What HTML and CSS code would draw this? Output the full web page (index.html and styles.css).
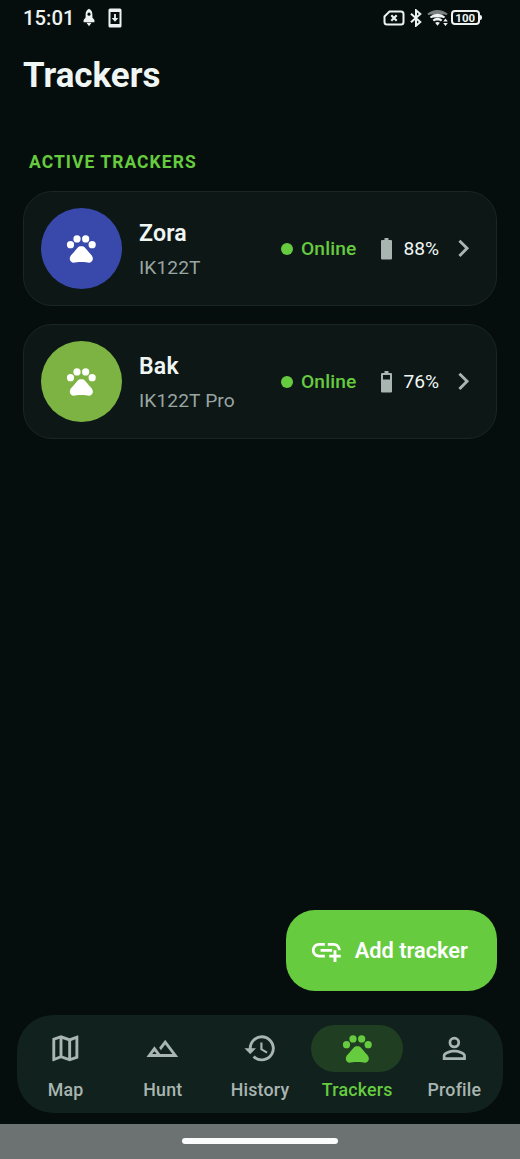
FILE: index.html
```html
<!DOCTYPE html>
<html lang="en">
<head>
<meta charset="utf-8">
<title>Trackers</title>
<link rel="stylesheet" href="styles.css">
</head>
<body>
<svg class="defs" width="0" height="0" aria-hidden="true">
  <symbol id="paw" viewBox="0 0 24 24">
    <circle cx="4.5" cy="9.5" r="2.5"/><circle cx="9" cy="5.5" r="2.5"/><circle cx="15" cy="5.5" r="2.5"/><circle cx="19.5" cy="9.5" r="2.5"/>
    <path d="M17.34 14.86c-.87-1.02-1.6-1.89-2.48-2.91-.46-.54-1.05-1.08-1.75-1.32-.11-.04-.22-.07-.33-.09-.25-.04-.52-.04-.78-.04s-.53 0-.79.05c-.11.02-.22.05-.33.09-.7.24-1.28.78-1.75 1.32-.87 1.02-1.6 1.89-2.48 2.91-1.31 1.31-2.92 2.76-2.62 4.79.29 1.02 1.02 2.03 2.33 2.32.73.15 3.06-.44 5.54-.44h.18c2.48 0 4.81.58 5.54.44 1.31-.29 2.04-1.31 2.33-2.32.31-2.04-1.3-3.49-2.61-4.8z"/>
  </symbol>
  <symbol id="chevron" viewBox="0 0 24 24"><path d="M10 6 8.59 7.41 13.17 12l-4.58 4.59L10 18l6-6z"/></symbol>
</svg>
<div class="screen">
  <div class="status">
    <span class="clock">15:01</span>
    <svg class="rocket" viewBox="0 0 12 20"><path fill-rule="evenodd" d="M6 .8C3.700 2 2.600 4 2.600 6.500V9.500L.6 12V14.300H11.400V12L9.400 9.500V6.500C9.400 4 8.300 2 6 .8zM6 4.600a1.600 1.600 0 1 1 0 3.200 1.600 1.600 0 0 1 0-3.200z"/><path d="M3.500 14.800H8.500L6 18.300z"/></svg>
    <svg class="update" viewBox="0 0 14 20"><path fill-rule="evenodd" d="M2 .5H12A1.500 1.500 0 0 1 13.500 2V18A1.500 1.500 0 0 1 12 19.500H2A1.500 1.500 0 0 1 .5 18V2A1.500 1.500 0 0 1 2 .5zM2.500 4V16H11.500V4z"/><path d="M6.100 6H7.900V10H10.300L7 13.800 3.700 10H6.100z"/></svg>
    <span class="spacer"></span>
    <svg class="sim" viewBox="0 0 22 16"><path d="M6.500 1.500H18a2.500 2.500 0 0 1 2.500 2.500V12a2.500 2.500 0 0 1-2.500 2.500H4A2.500 2.500 0 0 1 1.500 12V6.500z" fill="none" stroke="currentColor" stroke-width="2"/><path d="m8.300 5.300 5.400 5.400m0-5.400-5.400 5.400" stroke="currentColor" stroke-width="2.200"/></svg>
    <svg class="bluetooth" viewBox="0 0 12 18"><path d="m1 4.700 9.300 8.300L6 16.700V1.300L10.300 5 1 13.300" fill="none" stroke="currentColor" stroke-width="2"/></svg>
    <svg class="wifi" viewBox="0 0 22 18" fill="none" stroke="currentColor" stroke-width="2.200"><path d="M1 5.500C6.500.8 14.500.8 20 5.500" opacity=".5"/><path d="M3.500 8.500C7.500 5 13.500 5 17.500 8.500M6.300 11.600C8.700 9.400 12.300 9.400 14.700 11.600"/><path fill="currentColor" stroke="none" d="m10.500 16.700-2.400-2.900c1.400-1.200 3.400-1.200 4.800 0zM18.500 9.500l2.300 3h-4.600zM18.500 17l-2.300-3h4.600z"/></svg>
    <span class="power"><span class="power-level">100</span><span class="power-tip"></span></span>
  </div>
  <h1 class="title">Trackers</h1>
  <h2 class="section">ACTIVE TRACKERS</h2>
  <div class="cards">
    <div class="card">
      <div class="avatar blue"><svg class="icon"><use href="#paw"/></svg></div>
      <div class="info"><div class="name">Zora</div><div class="model">IK122T</div></div>
      <span class="dot"></span><span class="online">Online</span>
      <svg class="battery" viewBox="0 0 11 22"><path d="M3.500 0h4v2H10a1 1 0 0 1 1 1v17.500a1 1 0 0 1-1 1H1a1 1 0 0 1-1-1V3a1 1 0 0 1 1-1h2.500z"/></svg>
      <span class="percent">88%</span>
      <svg class="icon chevron"><use href="#chevron"/></svg>
    </div>
    <div class="card">
      <div class="avatar green"><svg class="icon"><use href="#paw"/></svg></div>
      <div class="info"><div class="name">Bak</div><div class="model">IK122T Pro</div></div>
      <span class="dot"></span><span class="online">Online</span>
      <svg class="battery" viewBox="0 0 11 22"><path fill-rule="evenodd" d="M3.500 0h4v2H10a1 1 0 0 1 1 1v17.500a1 1 0 0 1-1 1H1a1 1 0 0 1-1-1V3a1 1 0 0 1 1-1h2.500zM2 4v4.600h7V4z"/></svg>
      <span class="percent">76%</span>
      <svg class="icon chevron"><use href="#chevron"/></svg>
    </div>
  </div>
  <button class="add">
    <svg class="icon" viewBox="0 0 24 24"><path d="M8 11h8v2H8zm12.100 1H22c0-2.760-2.240-5-5-5h-4v1.900h4c1.710 0 3.100 1.390 3.100 3.100zM3.900 12c0-1.710 1.390-3.100 3.100-3.100h4V7H7c-2.760 0-5 2.240-5 5s2.240 5 5 5h4v-1.900H7c-1.710 0-3.100-1.390-3.100-3.100zM19 12h-2v3h-3v2h3v3h2v-3h3v-2h-3z"/></svg>
    <span class="add-label">Add tracker</span>
  </button>
  <nav class="nav">
    <div class="tab"><span class="pill"><svg class="icon" viewBox="0 0 24 24"><path fill-rule="evenodd" d="M20.500 3l-.16.030L15 5.100 9 3 3.360 4.900c-.21.070-.36.250-.36.480V20.500c0 .28.220.5.500.5l.16-.030L9 18.900l6 2.100 5.640-1.900c.21-.070.360-.25.360-.48V3.500c0-.28-.22-.5-.5-.5zM10 5.470l4 1.400v11.660l-4-1.400V5.470zm-5 .99l3-1.010v11.700l-3 1.160V6.460zm14 11.080l-3 1.010V6.860l3-1.160v11.840z"/></svg></span><span class="label">Map</span></div>
    <div class="tab"><span class="pill"><svg class="icon" viewBox="0 0 24 24"><path fill-rule="evenodd" d="M14 6l-4.220 5.630 1.250 1.670L14 9.330 19 16h-8.460l-4.010-5.370L1 18h22L14 6zM5 16l1.520-2.030L8.040 16H5z"/></svg></span><span class="label">Hunt</span></div>
    <div class="tab"><span class="pill"><svg class="icon" viewBox="0 0 24 24"><path d="M13 3a9 9 0 0 0-9 9H1l3.890 3.890.070.140L9 12H6c0-3.870 3.130-7 7-7s7 3.130 7 7-3.130 7-7 7c-1.930 0-3.680-.79-4.940-2.060l-1.420 1.420A8.954 8.954 0 0 0 13 21a9 9 0 0 0 0-18zm-1 5v5l4.280 2.540.72-1.210-3.500-2.080V8H12z"/></svg></span><span class="label">History</span></div>
    <div class="tab active"><span class="pill"><svg class="icon"><use href="#paw"/></svg></span><span class="label">Trackers</span></div>
    <div class="tab"><span class="pill"><svg class="icon" viewBox="0 0 24 24"><path fill-rule="evenodd" d="M12 4a4 4 0 1 0 0 8 4 4 0 0 0 0-8zm0 1.900a2.100 2.100 0 1 1 0 4.200 2.100 2.100 0 0 1 0-4.200zM12 13c-2.670 0-8 1.340-8 4v3h16v-3c0-2.660-5.330-4-8-4zm0 1.900c2.970 0 6.100 1.460 6.100 2.100v1.100H5.900V17c0-.64 3.130-2.100 6.100-2.100z"/></svg></span><span class="label">Profile</span></div>
  </nav>
  <div class="gesture"><span class="handle"></span></div>
</div>
</body>
</html>
```
FILE: styles.css
```css
* { box-sizing: border-box; }
body { margin: 0; background: #050e0d; font-family: Roboto, sans-serif; }
svg { display: block; fill: currentColor; flex: none; }
.defs { position: absolute; }
.screen { width: 520px; height: 1159px; display: flex; flex-direction: column; background: #050e0d; color: #f0f6f4; overflow: hidden; }
.status { height: 35px; padding: 0 38px 0 23px; display: flex; align-items: center; flex: none; color: #edf2f1; }
.clock { font-size: 20.3px; font-weight: 500; width: 59.5px; }
.rocket { width: 12px; height: 20px; }
.update { width: 14px; height: 20px; margin-left: 13px; }
.spacer { flex: 1; }
.sim { width: 22px; height: 16px; }
.bluetooth { width: 12px; height: 18px; margin-left: 5px; }
.wifi { width: 22px; height: 18px; margin-left: 5px; }
.power { display: flex; align-items: center; margin-left: 2px; }
.power-level { width: 29.5px; height: 15px; border: 2px solid #edf2f1; border-radius: 4px; font-size: 11.5px; line-height: 12px; font-weight: 700; text-align: center; }
.power-tip { width: 2px; height: 5px; background: #edf2f1; border-radius: 0 2px 2px 0; }
.title { margin: 20px 0 0 23px; font-size: 34.9px; line-height: 42px; font-weight: 700; }
.section { margin: 54px 0 0 29px; font-size: 17.5px; line-height: 22px; font-weight: 700; letter-spacing: 1.05px; color: #66cb3f; }
.cards { margin: 18px 23px 0; display: flex; flex-direction: column; gap: 18px; }
.card { height: 115px; border: 1.5px solid #1a2624; border-radius: 29px; background: #0c1716; padding: 0 16px 0 16.5px; display: flex; align-items: center; }
.avatar { width: 81px; height: 81px; border-radius: 50%; display: flex; align-items: center; justify-content: center; flex: none; color: #fff; }
.blue { background: #3949ab; }
.green { background: #7cb342; }
.icon { width: 34.67px; height: 34.67px; }
.info { width: 159px; padding: 5px 0 0 17.5px; flex: none; }
.name { font-size: 23.1px; line-height: 32px; font-weight: 600; letter-spacing: .2px; }
.model { margin-top: 2px; font-size: 19.2px; line-height: 32px; letter-spacing: .1px; color: #9aa5a2; white-space: nowrap; }
.dot { width: 12px; height: 12px; border-radius: 50%; background: #66cb3f; flex: none; }
.online { margin-left: 8.5px; width: 80px; font-size: 19.2px; font-weight: 500; letter-spacing: .15px; color: #66cb3f; flex: none; }
.battery { width: 11px; height: 22px; color: #a9b5b1; }
.percent { margin-left: 11.5px; width: 42px; font-size: 19.2px; flex: none; }
.chevron { color: #a9b5b1; }
.add { margin: auto 23px 24px auto; width: 211.5px; height: 81px; padding: 0 0 0 23.5px; border: 0; border-radius: 29px; background: #66cb3f; color: #fff; display: flex; align-items: center; gap: 11px; font-family: inherit; flex: none; }
.add-label { font-size: 21.8px; font-weight: 600; white-space: nowrap; }
.nav { margin: 0 17px 11px; height: 98px; padding-top: 10px; border-radius: 36px; background: #11211d; display: flex; flex: none; }
.tab { flex: 1 1 0; display: flex; flex-direction: column; align-items: center; color: #a9b5b1; }
.pill { width: 92px; height: 47px; border-radius: 24px; display: flex; align-items: center; justify-content: center; }
.label { margin-top: 6px; font-size: 17.8px; line-height: 23px; font-weight: 500; letter-spacing: .2px; }
.active { color: #66cb3f; }
.active .pill { background: #203f22; }
.gesture { height: 35px; background: #6c7271; display: flex; justify-content: center; padding-top: 14px; flex: none; }
.handle { width: 156px; height: 6px; border-radius: 3px; background: #fafcfb; }
```
